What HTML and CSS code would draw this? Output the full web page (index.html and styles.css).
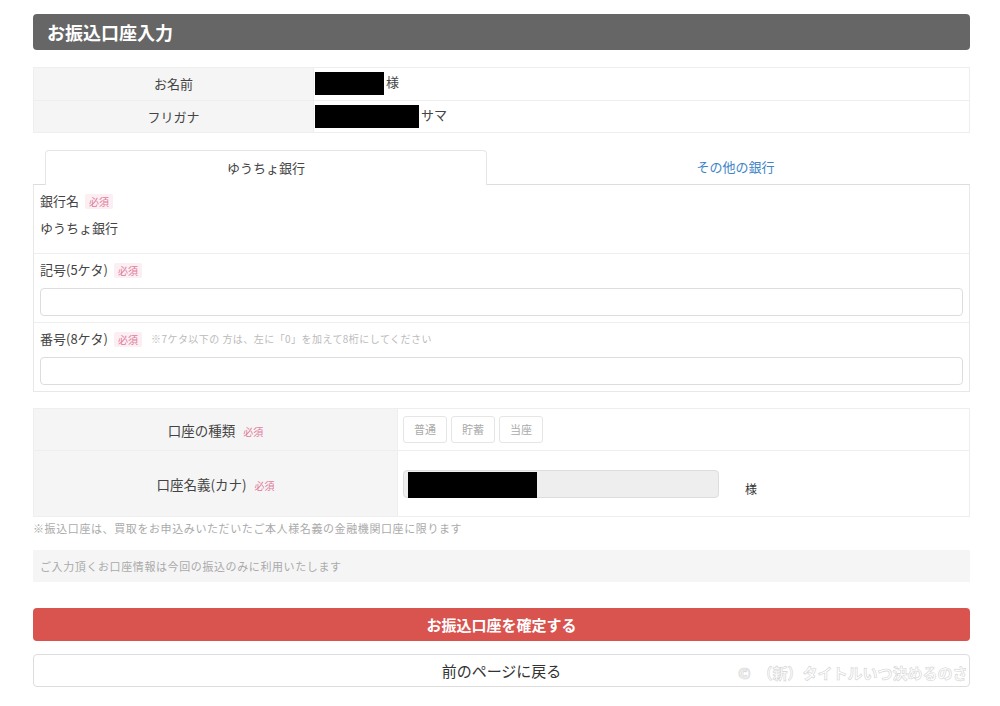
FILE: index.html
```html
<!DOCTYPE html>
<html lang="ja">
<head>
<meta charset="utf-8">
<title>お振込口座入力</title>
<link rel="stylesheet" href="styles.css">
</head>
<body>
<div class="page">
  <h1 class="title">お振込口座入力</h1>

  <table class="info">
    <tr>
      <th>お名前</th>
      <td><span class="mask mask-name"></span>様</td>
    </tr>
    <tr>
      <th>フリガナ</th>
      <td><span class="mask mask-kana"></span>サマ</td>
    </tr>
  </table>

  <div class="tabs">
    <div class="tab tab-active">ゆうちょ銀行</div>
    <div class="tab tab-other">その他の銀行</div>
  </div>

  <div class="panel">
    <div class="section section-first">
      <div class="label">銀行名<span class="req">必須</span></div>
      <div class="value">ゆうちょ銀行</div>
    </div>
    <div class="section">
      <div class="label">記号(5ケタ)<span class="req">必須</span></div>
      <div class="input"></div>
    </div>
    <div class="section">
      <div class="label">番号(8ケタ)<span class="req">必須</span><span class="hint">※7ケタ以下の 方は、左に「0」を加えて8桁にしてください</span></div>
      <div class="input"></div>
    </div>
  </div>

  <table class="account">
    <tr class="row-type">
      <th>口座の種類<span class="req-plain">必須</span></th>
      <td>
        <div class="types">
          <span class="type-btn">普通</span>
          <span class="type-btn">貯蓄</span>
          <span class="type-btn">当座</span>
        </div>
      </td>
    </tr>
    <tr class="row-holder">
      <th>口座名義(カナ)<span class="req-plain">必須</span></th>
      <td>
        <div class="holder">
          <div class="holder-input"><span class="mask mask-holder"></span></div>
          <span class="sama">様</span>
        </div>
      </td>
    </tr>
  </table>

  <p class="note">※振込口座は、買取をお申込みいただいたご本人様名義の金融機関口座に限ります</p>
  <div class="notice">ご入力頂くお口座情報は今回の振込のみに利用いたします</div>

  <div class="btn-primary">お振込口座を確定する</div>
  <div class="btn-back">前のページに戻る</div>

  <div class="watermark">©&nbsp;&nbsp;（新）タイトルいつ決めるのさ</div>
</div>
</body>
</html>
```
FILE: styles.css
```css
* { box-sizing: border-box; }
html, body { margin: 0; padding: 0; background: #fff; }
body {
  font-family: "Noto Sans CJK JP", "Noto Sans", sans-serif;
  color: #333;
  font-size: 13px;
}
.page {
  position: relative;
  width: 1000px;
  height: 706px;
  padding: 14px 30px 0 33px;
  overflow: hidden;
}
.title {
  margin: 0;
  height: 36px;
  line-height: 36px;
  background: #666;
  color: #fff;
  font-size: 18px;
  font-weight: bold;
  padding-left: 14px;
  border-radius: 4px;
}
.info {
  margin-top: 17px;
  width: 937px;
  border-collapse: collapse;
}
.info th, .info td {
  border: 1px solid #eee;
  height: 32.5px;
  padding: 0;
  font-weight: normal;
  font-size: 13px;
  vertical-align: middle;
}
.info th {
  width: 280px;
  background: #f5f5f5;
  text-align: center;
  color: #444;
}
.info td {
  padding-left: 1px;
  color: #444;
}
.mask {
  display: inline-block;
  background: #000;
  vertical-align: middle;
}
.mask-name { width: 69px; height: 23px; margin-right: 2px; }
.mask-kana { width: 104px; height: 23px; margin-right: 2px; }

.tabs {
  margin-top: 17px;
  display: flex;
  height: 35px;
  border-bottom: 1px solid #ddd;
}
.tab {
  line-height: 34px;
  font-size: 13px;
}
.tab-active {
  margin-left: 12px;
  width: 442px;
  text-align: center;
  border: 1px solid #e6e6e6;
  border-bottom: none;
  border-radius: 4px 4px 0 0;
  background: #fff;
  margin-bottom: -1px;
  height: 35px;
  color: #444;
}
.tab-other {
  flex: 1;
  text-align: center;
  padding-left: 14px;
  color: #3d85c6;
}
.panel {
  border: 1px solid #e8e8e8;
  border-top: none;
}
.section {
  padding: 6px 6px 6px 6px;
  border-top: 1px solid #eee;
}
.section-first {
  border-top: none;
  padding-top: 6px;
  padding-bottom: 15px;
}
.label {
  height: 20px;
  line-height: 20px;
  font-size: 13px;
  display: flex;
  align-items: center;
  white-space: nowrap;
  color: #444;
}
.req {
  display: inline-block;
  margin-left: 6px;
  background: #fbeff3;
  color: #e2799a;
  font-size: 10px;
  line-height: 15px;
  padding: 0 4px;
  border-radius: 2px;
}
.hint {
  margin-left: 9px;
  color: #bbb;
  font-size: 10px;
  letter-spacing: 0.45px;
}
.value {
  margin-top: 7px;
  height: 20px;
  line-height: 20px;
  font-size: 13px;
  color: #444;
}
.input {
  margin-top: 8px;
  height: 28px;
  border: 1px solid #ddd;
  border-radius: 4px;
  background: #fff;
}

.account {
  margin-top: 16px;
  width: 937px;
  border-collapse: collapse;
}
.account th, .account td {
  border: 1px solid #eee;
  padding: 0;
  vertical-align: middle;
}
.account th {
  width: 364px;
  background: #f5f5f5;
  font-weight: normal;
  text-align: center;
  font-size: 13.5px;
  color: #444;
}
.row-type th, .row-type td { height: 42px; }
.row-holder th, .row-holder td { height: 66px; }
.req-plain {
  margin-left: 8px;
  color: #e2799a;
  font-size: 10px;
}
.types {
  display: flex;
  gap: 4px;
  padding-left: 5px;
}
.type-btn {
  width: 44px;
  height: 27px;
  line-height: 25px;
  text-align: center;
  border: 1px solid #e5e5e5;
  border-radius: 3px;
  color: #aaa;
  font-size: 11px;
}
.holder {
  display: flex;
  align-items: center;
  padding-left: 5px;
}
.holder-input {
  width: 316px;
  height: 28px;
  background: #eee;
  border: 1px solid #ddd;
  border-radius: 4px;
  padding: 1px 0 0 4px;
  display: flex;
}
.mask-holder { width: 129px; height: 26px; }
.sama {
  margin-left: 26px;
  margin-top: 10px;
  font-size: 12px;
}
.note {
  margin: 3px 0 0 0;
  height: 16px;
  line-height: 16px;
  font-size: 11px;
  color: #aaa;
  letter-spacing: 0.6px;
}
.notice {
  margin-top: 14px;
  height: 32px;
  line-height: 32px;
  background: #f5f5f5;
  padding-left: 7px;
  font-size: 11px;
  color: #aaa;
  letter-spacing: 0.6px;
}
.btn-primary {
  margin-top: 26px;
  height: 33px;
  line-height: 33px;
  background: #d9534f;
  border-radius: 4px;
  color: #fff;
  font-size: 15px;
  font-weight: bold;
  text-align: center;
}
.btn-back {
  margin-top: 13px;
  height: 33px;
  line-height: 31px;
  border: 1px solid #ddd;
  border-radius: 4px;
  color: #333;
  font-size: 15px;
  text-align: center;
}
.watermark {
  position: absolute;
  left: 738px;
  top: 662px;
  white-space: nowrap;
  font-size: 15px;
  font-weight: bold;
  color: rgba(255,255,255,0.9);
  -webkit-text-stroke: 0.6px #d4d4d4;
}
```
